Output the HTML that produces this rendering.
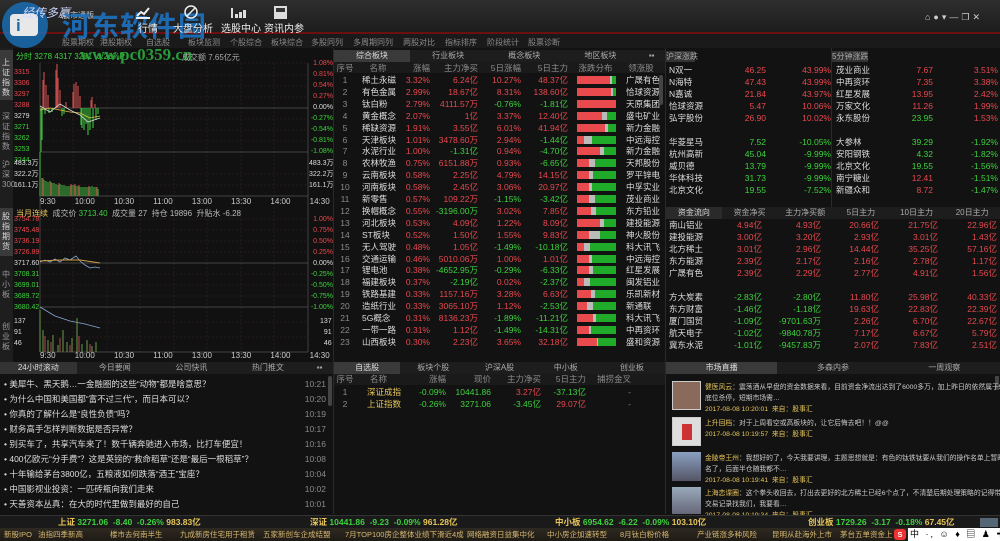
<!DOCTYPE html><html><head><meta charset="utf-8"><style>
*{margin:0;padding:0;box-sizing:border-box}
body{width:1000px;height:541px;overflow:hidden;background:#111;font-family:"Liberation Sans","Noto Sans CJK SC",sans-serif;font-size:8.5px;color:#ddd;position:relative}
.a{position:absolute;white-space:nowrap}
.R{color:#e8484e}.G{color:#3dd23d}.W{color:#ddd}.Y{color:#e8c65a}.g{color:#8a8a8a}
.row{position:absolute;left:0;height:12px;line-height:12px;display:flex;white-space:nowrap}
.row span{display:block;overflow:hidden}
.tabs{position:absolute;display:flex;height:12px;line-height:12px;background:#1d1d1d;color:#aaa;font-size:8px}
.tabs div{flex:1;text-align:center}
.tabs .on{background:#3a3a3a;color:#ddd}
.bar{display:flex;height:8px;margin-top:2px}
.bar i{display:block;height:8px}
</style></head><body>
<div class="a" style="left:0;top:0;width:1000px;height:33px;background:linear-gradient(#2e2e2e,#1c1c1c)"></div>
<div class="a" style="left:0;top:32px;width:1000px;height:2px;background:#6a1010"></div>
<div class="a" style="left:0;top:34px;width:1000px;height:14px;background:#1a1a1a"></div>
<div class="a" style="left:2px;top:2px;width:46px;height:46px;border-radius:50%;background:#1a6db3;opacity:.85"></div>
<div class="a" style="left:10px;top:14px;width:28px;height:22px;border-radius:4px;background:#e8e8e8"></div>
<div class="a" style="left:16px;top:16px;font-size:17px;font-weight:bold;color:#1a6db3">i</div>
<div class="a" style="left:22px;top:4px;font-size:12px;color:#cfd8ff;font-style:italic">经传多赢</div>
<div class="a" style="left:62px;top:10px;font-size:8px;color:#ccc">股市通版</div>
<div class="a" style="left:62px;top:5px;font-size:28px;font-weight:bold;color:#1e72c0;letter-spacing:1px;opacity:.9">河东软件园</div>
<svg class="a" style="left:130px;top:4px" width="170" height="16">
<path d="M7 12 L11 8 L14 10 L19 4" stroke="#eee" stroke-width="2" fill="none"/><rect x="6" y="13" width="14" height="2" fill="#eee"/>
<circle cx="61" cy="8" r="6" stroke="#eee" stroke-width="1.5" fill="none"/><path d="M57 12 L65 4" stroke="#eee" stroke-width="1.5"/>
<rect x="101" y="4" width="2" height="10" fill="#ddd"/><rect x="105" y="10" width="3" height="4" fill="#ddd"/><rect x="109" y="8" width="3" height="6" fill="#ddd"/><rect x="113" y="6" width="3" height="8" fill="#ddd"/>
<rect x="144" y="2" width="13" height="13" fill="#ddd"/><rect x="146" y="4" width="9" height="4" fill="#333"/>
</svg>
<div class="a" style="left:138px;top:20px;font-size:10px;color:#eee">行情</div>
<div class="a" style="left:173px;top:20px;font-size:10px;color:#eee">大盘分析</div>
<div class="a" style="left:221px;top:20px;font-size:10px;color:#eee">选股中心</div>
<div class="a" style="left:264px;top:20px;font-size:10px;color:#eee">资讯内参</div>
<div class="a" style="left:925px;top:12px;font-size:9px;color:#ccc;letter-spacing:3px">⌂●▾—❐✕</div>
<div class="a g" style="top:37px;left:0;font-size:8px">
<span class="a" style="left:62px">股票期权</span><span class="a" style="left:100px">港股期权</span><span class="a" style="left:146px">自选股</span><span class="a" style="left:188px">板块监测</span><span class="a" style="left:230px">个股综合</span><span class="a" style="left:271px">板块综合</span><span class="a" style="left:311px">多股同列</span><span class="a" style="left:353px">多周期同列</span><span class="a" style="left:403px">两股对比</span><span class="a" style="left:445px">指标排序</span><span class="a" style="left:487px">阶段统计</span><span class="a" style="left:528px">股票诊断</span></div>

<div class="a" style="left:0;top:48px;width:13px;height:314px;background:#1e1e1e"></div>
<div class="a" style="left:0;top:50px;width:13px;height:50px;background:#3a3a3a"></div>
<div class="a" style="left:0;top:208px;width:13px;height:48px;background:#3a3a3a"></div>
<div class="a" style="left:2px;top:58px;width:9px;font-size:8px;line-height:10px;white-space:normal;color:#ddd">上证指数</div>
<div class="a" style="left:2px;top:112px;width:9px;font-size:8px;line-height:10px;white-space:normal;color:#999">深证指数</div>
<div class="a" style="left:2px;top:160px;width:9px;font-size:8px;line-height:10px;white-space:normal;color:#999">沪深300</div>
<div class="a" style="left:2px;top:212px;width:9px;font-size:8px;line-height:10px;white-space:normal;color:#ddd">股指期货</div>
<div class="a" style="left:2px;top:270px;width:9px;font-size:8px;line-height:10px;white-space:normal;color:#999">中小板</div>
<div class="a" style="left:2px;top:322px;width:9px;font-size:8px;line-height:10px;white-space:normal;color:#999">创业板</div>
<svg class="a" style="left:0;top:0" width="334" height="362">
<g stroke="#3a2222" stroke-width="0.6" stroke-dasharray="2,2">
<line x1="40" y1="63" x2="308" y2="63"/><line x1="40" y1="75" x2="308" y2="75"/><line x1="40" y1="86" x2="308" y2="86"/><line x1="40" y1="97" x2="308" y2="97"/><line x1="40" y1="119" x2="308" y2="119"/><line x1="40" y1="130" x2="308" y2="130"/><line x1="40" y1="141" x2="308" y2="141"/><line x1="40" y1="174" x2="308" y2="174"/><line x1="40" y1="185" x2="308" y2="185"/>
<line x1="40" y1="219" x2="308" y2="219"/><line x1="40" y1="230" x2="308" y2="230"/><line x1="40" y1="241" x2="308" y2="241"/><line x1="40" y1="252" x2="308" y2="252"/><line x1="40" y1="274" x2="308" y2="274"/><line x1="40" y1="285" x2="308" y2="285"/><line x1="40" y1="296" x2="308" y2="296"/><line x1="40" y1="322" x2="308" y2="322"/><line x1="40" y1="337" x2="308" y2="337"/>
<line x1="73" y1="63" x2="73" y2="352"/><line x1="107" y1="63" x2="107" y2="352"/><line x1="140" y1="63" x2="140" y2="352"/><line x1="174" y1="63" x2="174" y2="352"/><line x1="207" y1="63" x2="207" y2="352"/><line x1="241" y1="63" x2="241" y2="352"/><line x1="274" y1="63" x2="274" y2="352"/>
</g>
<g stroke="#555" stroke-width="0.7"><line x1="40" y1="108" x2="308" y2="108"/><line x1="40" y1="152" x2="308" y2="152"/><line x1="40" y1="196" x2="308" y2="196"/><line x1="40" y1="263" x2="308" y2="263"/><line x1="40" y1="307" x2="308" y2="307"/><line x1="40" y1="352" x2="308" y2="352"/><line x1="40" y1="63" x2="40" y2="352"/><line x1="308" y1="63" x2="308" y2="352"/></g>
<path d="M43 108V80 M44 108V72 M46 108V85 M48 108V95 M56 108V70 M57 108V64 M58 108V78 M60 108V90 M66 108V102 M73 108V92 M74 108V84 M76 108V82 M78 108V86 M80 108V96 M91 108V100 M92 108V97 M95 108V104" stroke="#c04a4a" stroke-width="1.2"/>
<path d="M41 108V152 M42 108V140 M45 108V114 M49 108V113 M52 108V112 M62 108V116 M64 108V114 M81 108V125 M82 108V128 M84 108V130 M86 108V124 M88 108V135 M90 108V130 M93 108V128 M96 108V120 M98 108V114" stroke="#3ab43a" stroke-width="1.2"/>
<path d="M40 110 L50 108 L60 110 L70 112 L80 113 L90 118 L100 116" stroke="#e0c040" fill="none" stroke-width="0.8"/>
<path d="M40 106 L50 112 L60 104 L70 110 L80 115 L88 122 L100 118" stroke="#ddd" fill="none" stroke-width="0.8"/>
<path d="M40 196V152 M42 196V178 M44 196V180 M46 196V181 M48 196V182 M50 196V181 M52 196V183 M54 196V183 M56 196V184 M58 196V185 M60 196V184 M62 196V185 M64 196V185 M66 196V186 M68 196V186 M70 196V186 M72 196V185 M74 196V185 M76 196V186 M78 196V186 M80 196V187 M82 196V187 M84 196V187 M86 196V187 M88 196V187 M90 196V187 M92 196V186 M94 196V187 M96 196V187 M98 196V189" stroke="#3a9a3a" stroke-width="1.3"/>
<path d="M43 196V178 M51 196V182 M59 196V183 M71 196V184 M75 196V184 M79 196V185 M89 196V186 M97 196V187" stroke="#b04040" stroke-width="1.3"/>
<path d="M40 262 L45 260 L50 262 L55 259 L60 262 L65 258 L70 260 L76 256 L80 261 L85 265 L90 268 L95 267 L100 268" stroke="#8aa8d8" fill="none" stroke-width="0.8"/>
<path d="M40 261 L60 260 L80 260 L100 263" stroke="#d0a040" fill="none" stroke-width="0.9"/>
<path d="M40 307 L55 316 L70 321 L85 324 L100 328" stroke="#8aa8d8" fill="none" stroke-width="0.8"/>
<path d="M40 352V310 M43 352V330 M48 352V340 M53 352V335 M58 352V345 M63 352V330 M67 352V342 M72 352V338 M77 352V318 M82 352V344 M87 352V340 M92 352V346 M96 352V342" stroke="#6a9a4a" stroke-width="1"/>
<path d="M45 352V336 M51 352V342 M60 352V338 M70 352V345 M79 352V336 M90 352V344" stroke="#b05050" stroke-width="1"/>
</svg>
<div class="a" style="left:16px;top:51px;font-size:8px"><span class="G">分时 3278 4317 3251 -0.26%P</span></div>
<div class="a" style="left:80px;top:45px;font-size:17px;font-weight:bold;color:#2a9a3a;font-family:'Liberation Serif',serif">www.pc0359.cn</div>
<div class="a" style="left:182px;top:52px;font-size:8px;color:#aaa">成交额 7.65亿元</div>
<div class="a" style="left:14px;top:67px;font-size:7px;line-height:11px;width:26px;white-space:normal"><div class="R">3315</div><div class="R">3306</div><div class="R">3297</div><div class="R">3288</div><div class="W">3279</div><div class="G">3271</div><div class="G">3262</div><div class="G">3253</div><div class="G">3244</div></div>
<div class="a" style="left:310px;top:58px;font-size:7px;line-height:11px;text-align:right;width:23px;white-space:normal"><div class="R">1.08%</div><div class="R">0.81%</div><div class="R">0.54%</div><div class="R">0.27%</div><div class="W">0.00%</div><div class="G">-0.27%</div><div class="G">-0.54%</div><div class="G">-0.81%</div><div class="G">-1.08%</div></div>
<div class="a W" style="left:14px;top:158px;font-size:7px;line-height:11px"><div>483.3万</div><div>322.2万</div><div>161.1万</div></div>
<div class="a W" style="left:309px;top:158px;font-size:7px;line-height:11px;text-align:right"><div>483.3万</div><div>322.2万</div><div>161.1万</div></div>
<div class="a" style="left:40px;top:197px;font-size:8px;color:#ccc;word-spacing:17px">9:30 10:00 10:30 11:00 13:00 13:30 14:00 14:30</div>
<div class="a" style="left:16px;top:208px;font-size:8px;color:#bbb"><span class="Y">当月连续</span>&nbsp; 成交价 <span class="G">3713.40</span>&nbsp; 成交量 27&nbsp; 持仓 19896&nbsp; 升贴水 -6.28</div>
<div class="a" style="left:14px;top:214px;font-size:7px;line-height:11px;width:26px;white-space:normal"><div class="R">3754.78</div><div class="R">3745.48</div><div class="R">3736.19</div><div class="R">3726.89</div><div class="W">3717.60</div><div class="G">3708.31</div><div class="G">3699.01</div><div class="G">3689.72</div><div class="G">3680.42</div></div>
<div class="a" style="left:310px;top:214px;font-size:7px;line-height:11px;text-align:right;width:23px;white-space:normal"><div class="R">1.00%</div><div class="R">0.75%</div><div class="R">0.50%</div><div class="R">0.25%</div><div class="W">0.00%</div><div class="G">-0.25%</div><div class="G">-0.50%</div><div class="G">-0.75%</div><div class="G">-1.00%</div></div>
<div class="a W" style="left:14px;top:316px;font-size:7px;line-height:11px"><div>137</div><div>91</div><div>46</div></div>
<div class="a W" style="left:320px;top:316px;font-size:7px;line-height:11px;text-align:right"><div>137</div><div>91</div><div>46</div></div>
<div class="a" style="left:40px;top:351px;font-size:8px;color:#ccc;word-spacing:17px">9:30 10:00 10:30 11:00 13:00 13:30 14:00 14:30</div>

<div class="a" style="left:333px;top:48px;width:332px;height:314px;background:#121212;border-left:1px solid #2a2a2a"></div>
<div class="tabs" style="left:334px;top:50px;width:331px"><div class="on">综合板块</div><div>行业板块</div><div>概念板块</div><div>地区板块</div><div style="flex:.35">▪▪</div></div>
<div class="a" style="left:334px;top:62px;width:331px;height:11px;background:#1a1a1a"></div>
<div id="mt" class="a" style="left:334px;top:62px;width:331px"></div>
<div class="a" style="left:659px;top:75px;width:4px;height:30px;background:#444;border-radius:2px"></div>

<div class="a" style="left:665px;top:48px;width:335px;height:314px;background:#121212;border-left:1px solid #2a2a2a"></div>
<div class="a" style="left:666px;top:51px;width:29px;height:11px;background:#333;color:#aaa;font-size:8px;line-height:11px;text-align:center">沪深涨跌</div>
<div class="a" style="left:832px;top:51px;width:36px;height:11px;background:#333;color:#aaa;font-size:8px;line-height:11px;text-align:center">5分钟涨跌</div>
<div class="a" style="left:831px;top:48px;width:1px;height:160px;background:#2a2a2a"></div>
<div id="rt" class="a" style="left:666px;top:0;width:334px"></div>
<div class="tabs" style="left:666px;top:207px;width:334px;height:12px"><div class="on" style="background:#2a2a2a">资金流向</div><div>资金净买</div><div>主力净买额</div><div>5日主力</div><div>10日主力</div><div>20日主力</div></div>

<div class="a" style="left:0;top:362px;width:333px;height:152px;background:#121212"></div>
<div class="tabs" style="left:0;top:362px;width:333px"><div class="on" style="background:#333">24小时滚动</div><div>今日要闻</div><div>公司快讯</div><div>热门推文</div><div style="flex:.35">▪▪</div></div>
<div id="nl" class="a" style="left:4px;top:378px;width:322px"></div>
<div class="a" style="left:328px;top:376px;width:4px;height:30px;background:#444;border-radius:2px"></div>

<div class="a" style="left:333px;top:362px;width:332px;height:152px;background:#121212;border-left:1px solid #2a2a2a"></div>
<div class="tabs" style="left:334px;top:362px;width:331px"><div class="on">自选股</div><div>板块个股</div><div>沪深A股</div><div>中小板</div><div>创业板</div></div>
<div class="a" style="left:334px;top:374px;width:331px;height:11px;background:#1a1a1a"></div>
<div class="row g" style="left:334px;top:373px"><span style="width:22px;text-align:center">序号</span><span style="width:45px;text-align:center">名称</span><span style="width:45px;text-align:right">涨幅</span><span style="width:45px;text-align:right">现价</span><span style="width:50px;text-align:right">主力净买</span><span style="width:45px;text-align:right">5日主力</span><span style="width:45px;text-align:right">捕捞金叉</span></div>
<div class="row" style="left:334px;top:386px"><span style="width:22px;text-align:center" class="g">1</span><span style="width:45px;text-align:right" class="Y">深证成指</span><span style="width:45px;text-align:right" class="G">-0.09%</span><span style="width:45px;text-align:right" class="G">10441.86</span><span style="width:50px;text-align:right" class="R">3.27亿</span><span style="width:45px;text-align:right" class="G">-37.13亿</span><span style="width:45px;text-align:right" class="g">-</span></div>
<div class="row" style="left:334px;top:398px"><span style="width:22px;text-align:center" class="g">2</span><span style="width:45px;text-align:right" class="Y">上证指数</span><span style="width:45px;text-align:right" class="G">-0.26%</span><span style="width:45px;text-align:right" class="G">3271.06</span><span style="width:50px;text-align:right" class="G">-3.45亿</span><span style="width:45px;text-align:right" class="R">29.07亿</span><span style="width:45px;text-align:right" class="g">-</span></div>

<div class="a" style="left:665px;top:362px;width:335px;height:152px;background:#121212;border-left:1px solid #2a2a2a"></div>
<div class="tabs" style="left:666px;top:362px;width:334px"><div class="on">市场直播</div><div>多森内参</div><div>一周观察</div></div>
<div class="a" style="left:995px;top:376px;width:4px;height:14px;background:#444"></div>
<div class="a" style="left:672px;top:381px;width:29px;height:29px;background:#8a6a5a;border:1px solid #ccc"></div>
<div class="a" style="left:672px;top:417px;width:29px;height:29px;background:#ddd;border:1px solid #ccc"><div style="margin:6px 9px;width:10px;height:16px;background:#c33"></div></div>
<div class="a" style="left:672px;top:452px;width:29px;height:29px;background:linear-gradient(#8aa0c0,#556)"></div>
<div class="a" style="left:672px;top:487px;width:29px;height:27px;background:linear-gradient(#9ab,#667)"></div>
<div class="a" style="left:705px;top:382px;font-size:6.8px;line-height:11px;color:#ccc"><span class="Y">健医风云</span>：震荡酒从早盘的资金数据来看，目前资金净流出达到了6000多万，加上昨日的依然属于5类<br>底位杀停，短期市场需…<br><span class="Y">2017-08-08 10:20:01&nbsp; 来自：股事汇</span></div>
<div class="a" style="left:705px;top:418px;font-size:6.8px;line-height:11px;color:#ccc"><span class="Y">上升回档</span>：对于上周看空或高板块的，让它后悔去吧！！@@<br><span class="Y">2017-08-08 10:19:57&nbsp; 来自：股事汇</span></div>
<div class="a" style="left:705px;top:453px;font-size:6.8px;line-height:11px;color:#ccc"><span class="Y">金陵帝王州</span>：我想好的了，今天我要讲理，主题思想就是：有色的钛铁钛要从我们的操作名单上暂时除<br>名了，后面半仓随我都不…<br><span class="Y">2017-08-08 10:19:41&nbsp; 来自：股事汇</span></div>
<div class="a" style="left:705px;top:488px;font-size:6.8px;line-height:11px;color:#ccc"><span class="Y">上海恋谍圈</span>：这个拳头收回去，打出去更好的北方稀土已经6个点了，不清楚后期处理策略的记得带上<br>交易记录找我们，我要看…<br><span class="Y">2017-08-08 10:19:34&nbsp; 来自：股事汇</span></div>

<div class="a" style="left:0;top:515px;width:1000px;height:13px;background:#1a1a1a;border-top:1px solid #333;font-size:8.5px;line-height:12px;font-weight:bold">
<span class="a" style="left:58px"><span class="Y">上证</span> <span class="G">3271.06&nbsp; -8.40&nbsp; -0.26%</span> <span class="Y">983.83亿</span></span>
<span class="a" style="left:310px"><span class="Y">深证</span> <span class="G">10441.86&nbsp; -9.23&nbsp; -0.09%</span> <span class="Y">961.28亿</span></span>
<span class="a" style="left:555px"><span class="Y">中小板</span> <span class="G">6954.62&nbsp; -6.22&nbsp; -0.09%</span> <span class="Y">103.10亿</span></span>
<span class="a" style="left:808px"><span class="Y">创业板</span> <span class="G">1729.26&nbsp; -3.17&nbsp; -0.18%</span> <span class="Y">67.45亿</span></span>
<span class="a" style="left:980px;top:2px;width:18px;height:9px;background:#567"></span></div>
<div class="a" style="left:0;top:528px;width:1000px;height:13px;background:linear-gradient(#2e2a22,#1e1a14);font-size:7.5px;line-height:13px;color:#d8b870">
<span class="a" style="left:4px">新股IPO</span><span class="a" style="left:38px">油指四季新高</span><span class="a" style="left:110px">楼市去何南半生</span><span class="a" style="left:180px">九成新房住宅用于租赁</span><span class="a" style="left:263px">五家新创车企成结盟</span><span class="a" style="left:345px">7月TOP100房企整体业绩下滑近4成</span><span class="a" style="left:467px">网络融资日益集中化</span><span class="a" style="left:547px">中小房企加速转型</span><span class="a" style="left:620px">8月钛白粉价格</span><span class="a" style="left:697px">产业链涨多种风险</span><span class="a" style="left:772px">昆明从赴海外上市</span><span class="a" style="left:840px">茅台五单资金上</span>
<span class="a" style="left:894px;top:1px;width:12px;height:11px;background:#e33;border-radius:3px;color:#fff;text-align:center;line-height:11px;font-weight:bold">S</span><span class="a" style="left:908px;background:#fff;width:92px;height:13px"></span><span class="a" style="left:910px;color:#000;font-size:9px;letter-spacing:2px">中 ·, ☺ ♦ ▤ ♟ ✚ ✎</span></div>

<script>
var M=[["稀土永磁","3.32%","6.24亿","10.27%","48.37亿","广晟有色",85,5],["有色金属","2.99%","18.67亿","8.31%","138.60亿","恰球资源",88,4],["钛白粉","2.79%","4111.57万","-0.76%","-1.81亿","天原集团",100,0],["黄金概念","2.07%","1亿","3.37%","12.40亿","盛屯矿业",65,12],["稀缺资源","1.91%","3.55亿","6.01%","41.94亿","新力金融",72,8],["天津板块","1.01%","3478.60万","2.94%","-1.44亿","中远海控",18,20],["水泥行业","1.00%","-1.31亿","0.94%","-4.70亿","新力金融",60,10],["农林牧渔","0.75%","6151.88万","0.93%","-6.65亿","天邦股份",30,15],["云南板块","0.58%","2.25亿","4.79%","14.15亿","罗平锌电",30,12],["河南板块","0.58%","2.45亿","3.06%","20.97亿","中孚实业",30,8],["新零售","0.57%","109.22万","-1.15%","-3.42亿","茂业商业",30,15],["换帽概念","0.55%","-3196.00万","3.02%","7.85亿","东方铅业",35,15],["河北板块","0.53%","4.09亿","1.22%","8.09亿","建投能源",60,10],["ST板块","0.52%","1.50亿","1.55%","9.83亿","神火股份",30,30],["无人驾驶","0.48%","1.05亿","-1.49%","-10.18亿","科大讯飞",18,15],["交通运输","0.46%","5010.06万","1.00%","1.01亿","中远海控",30,8],["锂电池","0.38%","-4652.95万","-0.29%","-6.33亿","红星发展",30,12],["福建板块","0.37%","-2.19亿","0.02%","-2.37亿","闽发铝业",18,15],["铁路基建","0.33%","1157.16万","3.28%","6.63亿","乐凯新材",35,10],["造纸行业","0.33%","3065.10万","1.12%","-2.53亿","新通联",25,15],["5G概念","0.31%","8136.23万","-1.89%","-11.21亿","科大讯飞",40,10],["一带一路","0.31%","1.12亿","-1.49%","-14.31亿","中再资环",30,5],["山西板块","0.30%","2.23亿","3.65%","32.18亿","盛和资源",50,5]];
function c(v){return v.charAt(0)=="-"?"G":"R"}
var h='<div class="row g" style="top:0"><span style="width:22px;text-align:center">序号</span><span style="width:44px;text-align:center">名称</span><span style="width:30px;text-align:right">涨幅</span><span style="width:48px;text-align:right">主力净买</span><span style="width:43px;text-align:right">5日涨幅</span><span style="width:47px;text-align:right">5日主力</span><span style="width:55px;text-align:center">涨跌分布</span><span style="width:36px;text-align:center">领涨股</span></div>';
M.forEach(function(r,i){var t=12+i*11.9;var gn=100-r[6]-r[7];
h+='<div class="row" style="top:'+t+'px"><span style="width:22px;text-align:center" class="g">'+(i+1)+'</span><span style="width:44px;padding-left:6px" class="W">'+r[0]+'</span><span style="width:30px;text-align:right" class="R">'+r[1]+'</span><span style="width:48px;text-align:right" class="'+c(r[2])+'">'+r[2]+'</span><span style="width:43px;text-align:right" class="'+c(r[3])+'">'+r[3]+'</span><span style="width:47px;text-align:right" class="'+c(r[4])+'">'+r[4]+'</span><span style="width:55px;padding-left:9px"><div class="bar" style="width:39px"><i style="width:'+r[6]+'%;background:#e84a4e"></i><i style="width:'+r[7]+'%;background:#bbb"></i><i style="width:'+gn+'%;background:#1faa2a"></i></div></span><span style="width:40px;padding-left:3px" class="W">'+r[5]+'</span></div>';});
document.getElementById('mt').innerHTML=h;
var R=[["N双一","46.25","43.99%","茂业商业","7.67","3.51%"],["N海特","47.43","43.99%","中再资环","7.35","3.38%"],["N嘉诚","21.84","43.97%","红星发展","13.95","2.42%"],["恰球资源","5.47","10.06%","万家文化","11.26","1.99%"],["弘宇股份","26.90","10.02%","永东股份","23.95","1.53%"],null,["华菱星马","7.52","-10.05%","大参林","39.29","-1.92%"],["杭州高新","45.04","-9.99%","安阳钢铁","4.32","-1.82%"],["威贝德","13.79","-9.99%","北京文化","19.55","-1.56%"],["华体科技","31.73","-9.99%","南宁糖业","12.41","-1.51%"],["北京文化","19.55","-7.52%","新疆众和","8.72","-1.47%"]];
h='';R.forEach(function(r,i){if(!r)return;var t=64+i*12;var p1=i<5?"R":"G";var c2=i<5?(i==4?"G":"R"):(i>=9?"R":"G");
h+='<div class="row" style="top:'+t+'px"><span style="width:50px;padding-left:3px" class="W">'+r[0]+'</span><span style="width:50px;text-align:right" class="'+p1+'">'+r[1]+'</span><span style="width:65px;text-align:right" class="'+p1+'">'+r[2]+'</span><span style="width:55px;padding-left:5px" class="W">'+r[3]+'</span><span style="width:47px;text-align:right" class="'+c2+'">'+r[4]+'</span><span style="width:65px;text-align:right" class="'+p1+'">'+r[5]+'</span></div>';});
var F=[["南山铝业","4.94亿","4.93亿","20.66亿","21.75亿","22.96亿"],["建投能源","3.00亿","3.20亿","2.93亿","3.01亿","1.43亿"],["北方稀土","3.01亿","2.96亿","14.44亿","35.25亿","57.16亿"],["东方能源","2.39亿","2.17亿","2.16亿","2.78亿","1.17亿"],["广晟有色","2.39亿","2.29亿","2.77亿","4.91亿","1.56亿"],null,["方大炭素","-2.83亿","-2.80亿","11.80亿","25.98亿","40.33亿"],["东方财富","-1.46亿","-1.18亿","19.63亿","22.83亿","22.39亿"],["厦门国贸","-1.09亿","-9701.63万","2.26亿","6.70亿","22.67亿"],["航天电子","-1.02亿","-9840.78万","7.17亿","6.67亿","5.79亿"],["冀东水泥","-1.01亿","-9457.83万","2.07亿","7.83亿","2.51亿"]];
F.forEach(function(r,i){if(!r)return;var t=219+i*12;h+='<div class="row" style="top:'+t+'px"><span style="width:40px;padding-left:3px" class="W">'+r[0]+'</span>';[56,59,58,59,59].forEach(function(w,k){h+='<span style="width:'+w+'px;text-align:right" class="'+c(r[k+1])+'">'+r[k+1]+'</span>'});h+='</div>'});
document.getElementById('rt').innerHTML=h;
var N=[["美犀牛、黑天鹅…一金融圈的这些“动物”都是啥意思？","10:21"],["为什么中国和美国都“富不过三代”，而日本可以？","10:20"],["你真的了解什么是“良性负债”吗？","10:19"],["财务高手怎样判断数据是否异常？","10:17"],["别买车了，共享汽车来了！数千辆奔驰进入市场，比打车便宜！","10:16"],["400亿欧元“分手费”？这是英镑的“救命稻草”还是“最后一根稻草”？","10:08"],["十年输给茅台3800亿，五粮液如何跌落“酒王”宝座？","10:04"],["中国影视业投资：一匹砖瓶向我们走来","10:02"],["天善资本丛真：在大的时代里做到最好的自己","10:01"]];
h='';N.forEach(function(r,i){h+='<div class="row" style="top:'+(i*15)+'px;width:322px;font-size:8.5px;justify-content:space-between"><span class="W">• '+r[0]+'</span><span class="g">'+r[1]+'</span></div>'});
document.getElementById('nl').innerHTML=h;
</script>
</body></html>
